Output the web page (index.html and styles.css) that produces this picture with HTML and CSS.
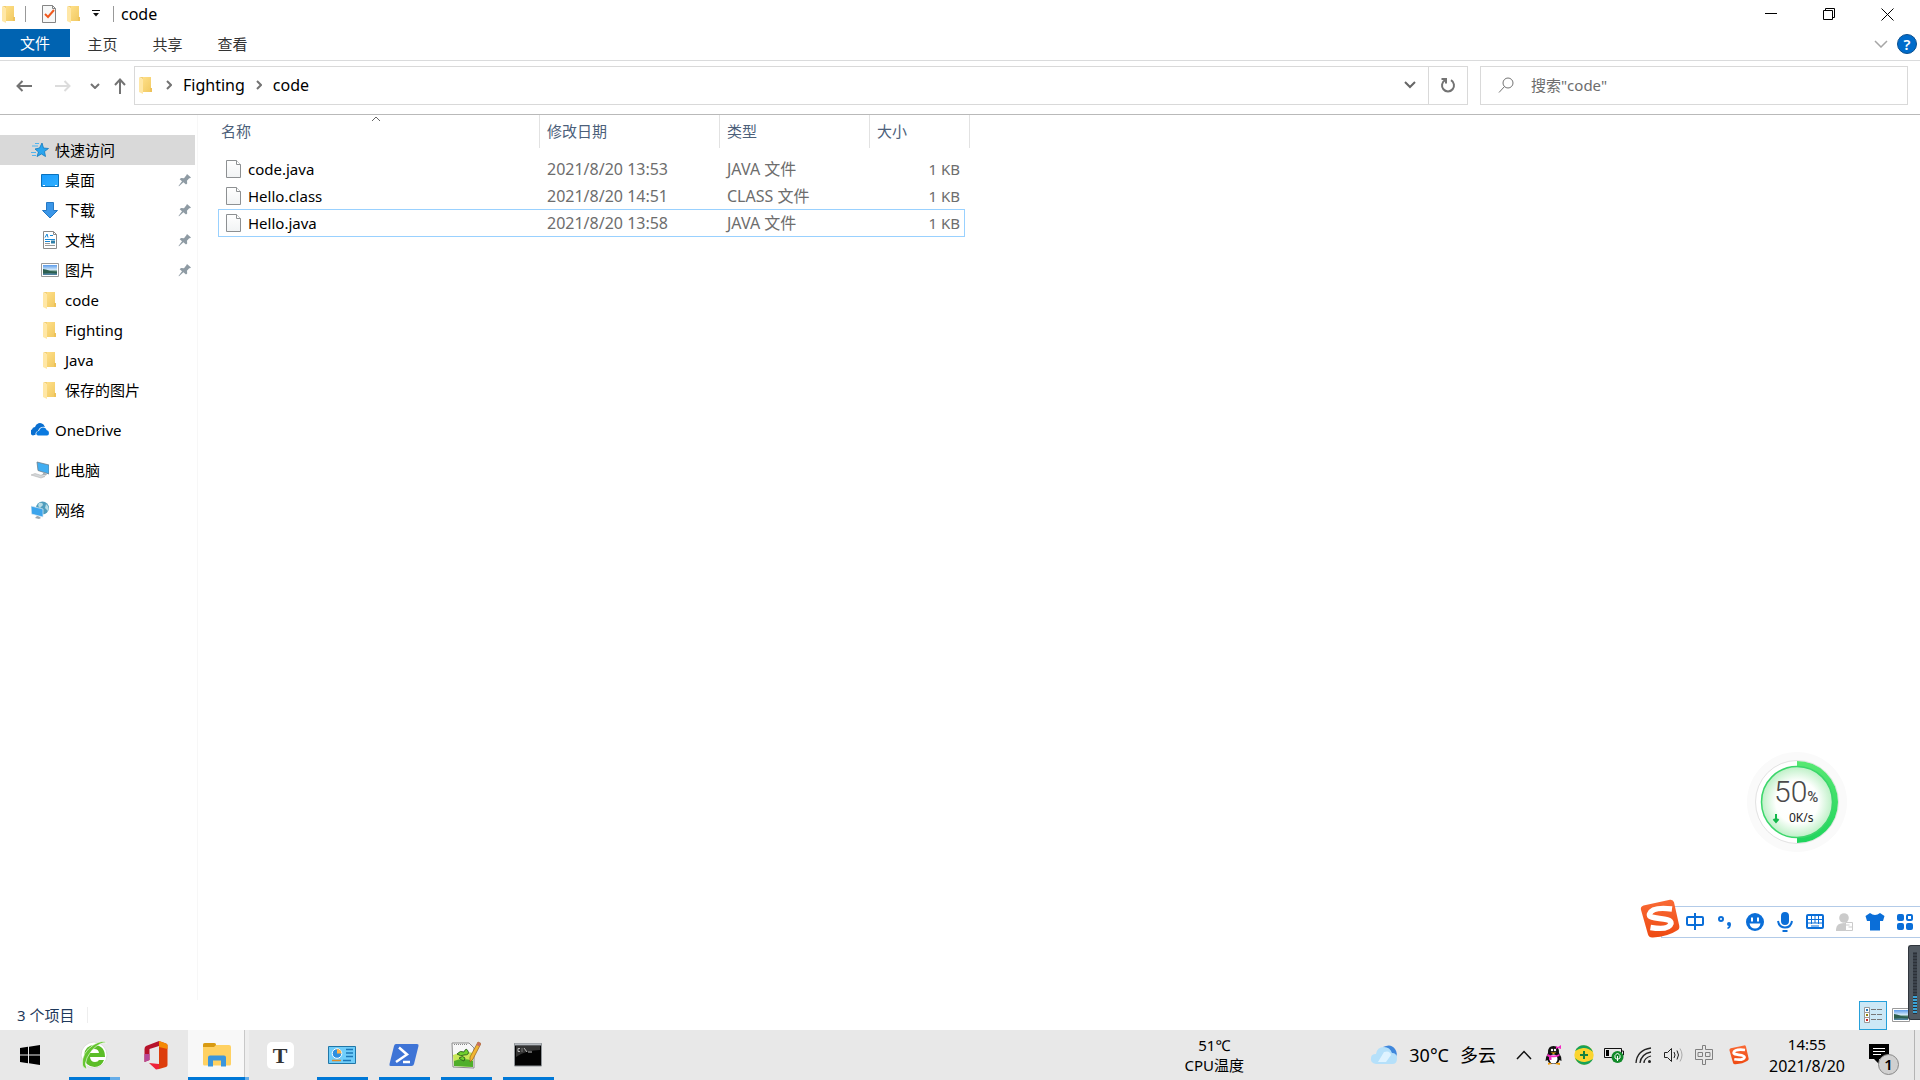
FILE: index.html
```html
<!DOCTYPE html>
<html lang="zh-CN">
<head>
<meta charset="utf-8">
<title>code</title>
<link rel="stylesheet" href="styles.css">
</head>
<body>
<svg class="defs" aria-hidden="true">
  <defs>
    <linearGradient id="g-folder" x1="0" y1="0" x2="1" y2="1"><stop offset="0" stop-color="#ffe08a"/><stop offset="1" stop-color="#f0c860"/></linearGradient>
    <linearGradient id="g-page" x1="0" y1="0" x2="0" y2="1"><stop offset="0" stop-color="#fff"/><stop offset="1" stop-color="#f1f3f4"/></linearGradient>
    <linearGradient id="g-sogou" x1="0" y1="0" x2="0" y2="1"><stop offset="0" stop-color="#f96a35"/><stop offset="1" stop-color="#ee4a12"/></linearGradient>
    <linearGradient id="g-screen" x1="0" y1="0" x2="1" y2="1"><stop offset="0" stop-color="#1a9cff"/><stop offset="1" stop-color="#2fb0ff"/></linearGradient>
    <linearGradient id="g-photo" x1="0" y1="0" x2="0" y2="1"><stop offset="0" stop-color="#5b9bea"/><stop offset=".5" stop-color="#d8ecfa"/><stop offset=".6" stop-color="#4e7f66"/><stop offset="1" stop-color="#4c7fa6"/></linearGradient>
  </defs>
  <symbol id="i-folder" viewBox="0 0 18 18">
    <path d="M5 1h9v11h1v4H6z" fill="url(#g-folder)"/><path d="M13 12h2v4h-2z" fill="#eec25a"/>
    <path d="M2 1.500l4 1.500v15l-4-2z" fill="#ffe7a6"/><path d="M2 1h4v2z" fill="#f3cf73"/>
  </symbol>
  <symbol id="i-file" viewBox="0 0 16 18">
    <path d="M.5.5h10l4 4v13H.5z" fill="url(#g-page)" stroke="#8d9092"/><path d="M10.500.500v4h4" fill="#fff" stroke="#8d9092"/>
  </symbol>
  <symbol id="i-pin" viewBox="0 0 14 14">
    <path d="M9 1l4 3.500-1 .8-.8-.1-2.200 2.600.2 2.600-1.200 1.100-2.600-2.300L1 13.200l-.5-.3 3.500-4.600-2.300-2L3 5l3 .2 2.200-2.600z" fill="#8f9ba4"/>
  </symbol>
  <symbol id="i-photo" viewBox="0 0 18 18">
    <path d="M.5 2.500h17v13H.5z" fill="#fff" stroke="#9a9a9a"/><path d="M2 4h14v10H2z" fill="url(#g-photo)"/><path d="M2 8q4 .3 7 2l7 1v1.500q-7-1-14 0z" fill="#2d5f50"/>
  </symbol>
  <symbol id="i-sogou" viewBox="0 0 40 40">
    <path d="M3.500 6.500L30 .8q3-.5 4 2.500L39.300 27q.5 3-2.300 4.500-9 6-24 7-4 .5-5-3L.9 10.500q-.5-3 2.600-4z" fill="url(#g-sogou)"/>
    <path d="M32 10Q12 7.500 9.500 15c-2 6.500 22 2.500 21.500 9.500Q29 31.500 10.500 28.500" fill="none" stroke="#fff" stroke-width="5.500"/>
  </symbol>
</svg>

<main class="window">
  <header class="titlebar">
    <svg class="icon"><use href="#i-folder"/></svg>
    <span class="divider"></span>
    <button class="quick" aria-label="属性"><svg class="icon" viewBox="0 0 18 18"><path d="M2.500.5h10l3 3v14h-13z" fill="#f7f8f8" stroke="#858585"/><path d="M12.500.5v3h3" fill="none" stroke="#858585"/><path d="M5 9l3 3 6-7" fill="none" stroke="#f0591e" stroke-width="2"/></svg></button>
    <button class="quick" aria-label="新建文件夹"><svg class="icon"><use href="#i-folder"/></svg></button>
    <button class="quick more" aria-label="自定义快速访问工具栏"><svg width="8" height="8" viewBox="0 0 8 8"><path d="M0 .5h8" stroke="#111"/><path d="M1 3h6L4 6.500z" fill="#111"/></svg></button>
    <span class="divider"></span>
    <h1 class="title">code</h1>
    <div class="controls">
      <button aria-label="最小化"><svg width="12" height="12"><path d="M0 5.500h12" stroke="#000"/></svg></button>
      <button aria-label="还原"><svg width="13" height="12" fill="none" stroke="#000"><path d="M.5 2.500h9v9h-9zM2.500 2V.5h9v9H10"/></svg></button>
      <button aria-label="关闭"><svg width="13" height="13" stroke="#000"><path d="M.5.5l12 12M12.500.5l-12 12"/></svg></button>
    </div>
  </header>

  <nav class="tabs">
    <button class="tab file">文件</button>
    <button class="tab">主页</button>
    <button class="tab">共享</button>
    <button class="tab">查看</button>
    <div class="tabs-end">
      <button aria-label="展开功能区"><svg width="14" height="8" fill="none" stroke="#a6a6a6"><path d="M1 1l6 6 6-6" stroke-width="1.500"/></svg></button>
      <button class="help" aria-label="帮助">?</button>
    </div>
  </nav>

  <div class="addressbar">
    <div class="nav">
      <button aria-label="后退"><svg width="16" height="12" fill="none" stroke="#737373" stroke-width="2"><path d="M1 6h15M6.500 1L1.500 6l5 5"/></svg></button>
      <button aria-label="前进"><svg width="16" height="12" fill="none" stroke="#dcdcdc" stroke-width="2"><path d="M0 6h15M9.500 1l5 5-5 5"/></svg></button>
      <button class="narrow" aria-label="最近位置"><svg width="10" height="6" fill="none" stroke="#737373" stroke-width="2"><path d="M1 1l4 4 4-4"/></svg></button>
      <button class="narrow" aria-label="上移"><svg width="12" height="16" fill="none" stroke="#737373" stroke-width="2"><path d="M6 16V2M1 7l5-5.500L11 7"/></svg></button>
    </div>
    <div class="path">
      <svg class="icon"><use href="#i-folder"/></svg>
      <svg class="sep" width="6" height="10" fill="none" stroke="#737373" stroke-width="2"><path d="M1 1l4 4-4 4"/></svg>
      <a href="#">Fighting</a>
      <svg class="sep" width="6" height="10" fill="none" stroke="#737373" stroke-width="2"><path d="M1 1l4 4-4 4"/></svg>
      <a href="#">code</a>
      <button class="drop" aria-label="以前的位置"><svg width="12" height="8" fill="none" stroke="#666" stroke-width="2"><path d="M1 1l5 5 5-5"/></svg></button>
      <button class="refresh" aria-label="刷新"><svg width="16" height="16" fill="none" stroke="#737373" stroke-width="2"><path d="M5 3.200A6 6 0 1 0 11 3.200"/><path d="M1.500 2H6v4.500"/></svg></button>
    </div>
    <label class="search">
      <svg width="16" height="16" fill="none" stroke="#737373"><circle cx="10" cy="6" r="5"/><path d="M6.500 9.500L1 15.500"/></svg>
      <input type="text" placeholder='搜索"code"' aria-label="搜索">
    </label>
  </div>

  <div class="content">
    <aside class="sidebar">
      <ul class="tree">
        <li><a class="node active" href="#"><svg class="icon" viewBox="0 0 18 18"><path d="M11 2l1.500 5 5 .5-4 3 1 5-4-2.500L6 15.500 7.500 11 4 8l4.500-1z" fill="#2aa5ee" stroke="#1379bd" stroke-width=".8"/><path d="M4 2.500h4M1 5h6M0 11.500h5M1 14.500h4" stroke="#4fb4ef"/></svg><span>快速访问</span></a>
          <ul>
            <li><a class="node" href="#"><svg class="icon" viewBox="0 0 18 18"><path d="M.5 3.500h17v12H.5z" fill="url(#g-screen)" stroke="#0a72bd"/><path d="M2 14.500h2m10 0h2" stroke="#fff"/></svg><span>桌面</span><svg class="pin"><use href="#i-pin"/></svg></a></li>
            <li><a class="node" href="#"><svg class="icon" viewBox="0 0 18 18"><path d="M5.500 1.500h7v8h4L9 17 1.500 9.500h4z" fill="#3a96e8" stroke="#2679c4"/></svg><span>下载</span><svg class="pin"><use href="#i-pin"/></svg></a></li>
            <li><a class="node" href="#"><svg class="icon" viewBox="0 0 18 18"><path d="M2.500.5h10l3 3v14h-13z" fill="#fff" stroke="#8a8a8a"/><path d="M12.500.5v3h3" fill="none" stroke="#8a8a8a"/><path d="M4 6.500l2-3.500 1 3.500M9 4.500h3M4 8.500h10M4 10.500h5" fill="none" stroke="#1688d8"/><path d="M10 9.500h4v3h-4z" fill="#2f7fa8"/><path d="M4 12.500h5M4 14.500h10" stroke="#999"/></svg><span>文档</span><svg class="pin"><use href="#i-pin"/></svg></a></li>
            <li><a class="node" href="#"><svg class="icon"><use href="#i-photo"/></svg><span>图片</span><svg class="pin"><use href="#i-pin"/></svg></a></li>
            <li><a class="node" href="#"><svg class="icon"><use href="#i-folder"/></svg><span>code</span></a></li>
            <li><a class="node" href="#"><svg class="icon"><use href="#i-folder"/></svg><span>Fighting</span></a></li>
            <li><a class="node" href="#"><svg class="icon"><use href="#i-folder"/></svg><span>Java</span></a></li>
            <li><a class="node" href="#"><svg class="icon"><use href="#i-folder"/></svg><span>保存的图片</span></a></li>
          </ul>
        </li>
        <li><a class="node" href="#"><svg class="icon" viewBox="0 0 18 18"><path d="M3.500 14A3 3 0 0 1 1 8.500 3 3 0 0 1 4 6a5 5 0 0 1 8.500-2.500L14 6q-5-1-7 4-3 .5-2.500 4z" fill="#0a6fd0"/><path d="M7 14.500q-2.500-1-1.500-3T8 10q1-3.500 4-3.500T15.500 9q2.500.5 2.500 3t-2 2.500z" fill="#0a7ae0"/></svg><span>OneDrive</span></a></li>
        <li><a class="node" href="#"><svg class="icon" viewBox="0 0 18 18"><path d="M6 1l12 3v9L7 9.500z" fill="#41aef2" stroke="#6b7f8d" stroke-width=".8"/><path d="M12 11v2l-2 1 5 .5 1-1.500-2-1z" fill="#a9b1b7"/><path d="M0 14l4-1.500 10 3-4 1.500z" fill="#d4d7d9" stroke="#aaa" stroke-width=".5"/></svg><span>此电脑</span></a></li>
        <li><a class="node" href="#"><svg class="icon" viewBox="0 0 18 18"><circle cx="11.500" cy="7" r="6.500" fill="#4f9dbd"/><path d="M8 2q4-1 4 2l-3 3q-3-2-1-5zm7 1q4 3 2 7l-3-3z" fill="#b6dce6"/><path d="M0 5l12 3v8L.5 13z" fill="#3ba4ec" stroke="#dceaf2" stroke-width=".7"/><path d="M6 15l-2 2 4 1 2-1-2-1.500z" fill="#9ca6ad"/></svg><span>网络</span></a></li>
      </ul>
    </aside>

    <section class="files">
      <table>
        <colgroup><col class="c-name"><col class="c-date"><col class="c-type"><col class="c-size"></colgroup>
        <thead>
          <tr><th class="sorted">名称<svg class="sort" width="10" height="6" fill="none" stroke="#666"><path d="M1 5l4-4 4 4"/></svg></th><th>修改日期</th><th>类型</th><th>大小</th></tr>
        </thead>
        <tbody>
          <tr><td><div class="name"><svg width="16" height="18"><use href="#i-file"/></svg>code.java</div></td><td class="wide">2021/8/20 13:53</td><td class="wide">JAVA 文件</td><td class="size">1 KB</td></tr>
          <tr><td><div class="name"><svg width="16" height="18"><use href="#i-file"/></svg>Hello.class</div></td><td class="wide">2021/8/20 14:51</td><td class="wide">CLASS 文件</td><td class="size">1 KB</td></tr>
          <tr class="focused"><td><div class="name"><svg width="16" height="18"><use href="#i-file"/></svg>Hello.java</div></td><td class="wide">2021/8/20 13:58</td><td class="wide">JAVA 文件</td><td class="size">1 KB</td></tr>
        </tbody>
      </table>
    </section>
  </div>

  <footer class="status">
    <span class="count">3 个项目</span>
    <div class="views">
      <button class="view on" aria-label="详细信息"><svg width="18" height="18" fill="none"><path d="M.5 1.500h5v5h-5zM.5 6.500h5v5h-5zM.5 11.500h5v5h-5z" fill="#fff" stroke="#999"/><path d="M2 4h2" stroke="#2474b5" stroke-width="2"/><path d="M2 9h2" stroke="#94840f" stroke-width="2"/><path d="M2 14h2" stroke="#c22" stroke-width="2"/><path d="M7 3.500h5m1 0h5M7 8.500h5m1 0h5M7 13.500h5m1 0h5" stroke="#777"/></svg></button>
      <button class="view" aria-label="大图标"><svg class="icon"><use href="#i-photo"/></svg></button>
    </div>
  </footer>
</main>

<footer class="taskbar">
  <button class="start" aria-label="开始"><svg width="20" height="20"><path d="M0 3l8-1.200V9.500H0zM9 1.700L20 0v9.500H9zM0 10.500h8v7.700L0 17zM9 10.500h11V20L9 18.300z"/></svg></button>
  <button class="app running multi" aria-label="浏览器"><svg width="28" height="30" viewBox="0 0 28 30"><circle cx="14" cy="15" r="13" fill="#fff" stroke="#ddd"/><path d="M25 17H10q.5 5 5 5 3 0 4-2h5q-2.500 7-9.500 7Q4 26 4 15.500 5 5 14.500 5 25 5.500 25 17zM10 13h9q-.5-4-4.500-4T10 13z" fill="#5bbd27"/><path d="M26.500 3Q23-.5 14 4.500 1 13 2.500 25q.5 3 4.500 4-3-5 0-11Q12 8 20 4q4-2 6.500-1z" fill="#64c52f" stroke="#fff" stroke-width=".6"/></svg></button>
  <button class="app" aria-label="Office"><svg width="24" height="30" viewBox="0 0 24 30"><path d="M15 1L2 6q-1.500 1-1.500 3v13l5-2V9l9.500-3z" fill="#b7132b"/><path d="M.5 14v8l5-2v-6z" fill="#b64898"/><path d="M15 1l7 2.500q1.500.7 1.500 2V25q0 1.300-1.500 2l-7 2z" fill="#dd3d0c"/><path d="M15 1l7 2.500q1.500.7 1.500 2V9L15 7z" fill="#f48a05"/><path d="M5 23l10 1v5l-3 .6z" fill="#ee2338"/></svg></button>
  <button class="app running active stack" aria-label="文件资源管理器"><svg width="28" height="24" viewBox="0 0 28 24"><path d="M0 2q0-2 2-2h9q2 0 2 2h13q2 0 2 2v17q0 1.500-1.500 1.500h-25Q0 22.500 0 21z" fill="#ffd162"/><path d="M0 4V2q0-2 2-2h9q2 0 2 2l-2 2z" fill="#d89a12"/><path d="M5 23.500v-9q0-2 2-2h14q2 0 2 2v9h-5v-6h-8v6z" fill="#3b96dd"/></svg></button>
  <button class="app" aria-label="Typora"><span class="typora">T</span></button>
  <button class="app running" aria-label="控制面板"><svg width="28" height="18" viewBox="0 0 28 18"><path d="M.5.5h27v17H.5z" fill="#6fcdfa" stroke="#2077a8"/><circle cx="9" cy="7.500" r="4.800" fill="#2c8fe0" stroke="#fff"/><path d="M9 7.500V3a4.500 4.500 0 0 1 4.500 4.500z" fill="#ffb347"/><path d="M18 3.500h7M18 7h7M18 10.500h7" stroke="#1d78b8" stroke-width="1.500"/><path d="M4 14.500h9" stroke="#e08b26" stroke-width="1.500"/><path d="M15 14.500h8" stroke="#1d78b8" stroke-width="1.500"/></svg></button>
  <button class="app running" aria-label="PowerShell"><svg width="30" height="22" viewBox="0 0 30 22"><path d="M7 0h21q2 0 1.500 2L25 20q-.5 2-2.500 2H1.500Q0 22 .5 20L5 2q.5-2 2-2z" fill="#3e74d6"/><path d="M10 3.500l8 7-11 7.500M14 18h7" fill="none" stroke="#fff" stroke-width="2.500"/></svg></button>
  <button class="app running" aria-label="Notepad++"><svg width="30" height="28" viewBox="0 0 30 28"><path d="M1 2h17l5 5v20L2 26z" fill="#f7f7f7" stroke="#8c8c8c"/><path d="M2 14q11-5 20-2v14L3 25z" fill="#c9e858"/><path d="M3 20q9-4 19 0v6L3 25z" fill="#4fae2a"/><path d="M6 13q3-4 7-2 2-5 4-1 2 4-4 4-3 2-7-1zm2 4q4-3 6 0l-1 3q-3-1-5-3z" fill="#6fd02d" stroke="#26531a" stroke-width=".8"/><path d="M3 3.500h14" stroke="#888" stroke-dasharray="1 1"/><path d="M27 1l3 1.500L22 18l-3 3 0-5z" fill="#f2b632" stroke="#91621e" stroke-width=".7"/><path d="M27 1l3 1.500-1.500 3-3-1.500z" fill="#c96e62"/></svg></button>
  <button class="app running" aria-label="命令提示符"><svg width="28" height="24" viewBox="0 0 28 24"><path d="M.5.500h27v22.500H.5z" fill="#030303" stroke="#8f9498"/><path d="M1 1.500h26" stroke="#b6bbc0" stroke-width="2"/><path d="M2 3h24v4q-14 0-24 7z" fill="#333"/><path d="M6 5.500H4v3h2M8 5.500v1m0 1v1M10 5l3 4M14 9h4" fill="none" stroke="#bbb"/></svg></button>

  <div class="tray">
    <div class="cpu"><span>51℃</span><span>CPU温度</span></div>
    <button class="weather"><svg width="28" height="20" viewBox="0 0 28 20"><path d="M13 2q8-4 12 2 3 4 1 8L16 8z" fill="#3f87dc"/><path d="M6 19Q0 18 1 13q0-4 5-4 1-7 8-7 6 0 8 6 5 0 5 5.500T22 19z" fill="#b5e0fa"/><path d="M8 17l6-10q6-2 7 3l-5 7z" fill="#dff3ff"/></svg><span>30°C</span><span>多云</span></button>
    <div class="icons">
      <button aria-label="显示隐藏的图标"><svg width="16" height="10" fill="none" stroke="#111" stroke-width="1.500"><path d="M1 9l7-7.500L15 9"/></svg></button>
      <button aria-label="QQ"><svg width="18" height="20" viewBox="0 0 18 20"><path d="M3 8q-.5-7 5.500-7T14 8q3 4 2.500 8l-2-1q-1 4-6 4t-6-4L.5 16Q1 11 3 8z" fill="#111"/><ellipse cx="8.500" cy="14" rx="4" ry="4.500" fill="#fff"/><circle cx="7" cy="5" r="1.200" fill="#fff"/><circle cx="10" cy="5" r="1.200" fill="#fff"/><path d="M5.500 7.500h6L8.500 9z" fill="#f7b500"/><path d="M2.500 9q6 3 12 0v2q-5 2-8 1v3H4v-3l-2-1zM11 1l2 1 3-2v4l-3-1-2 1z" fill="#f32bc2"/><path d="M3 18q2-1 4 1l-4 .8zm7 1q3-2 5-1v2z" fill="#f39b00"/></svg></button>
      <button aria-label="360安全卫士"><svg width="20" height="20" viewBox="0 0 20 20"><circle cx="10" cy="10" r="9.700" fill="#fbd42f"/><path d="M1 6Q4 0 10 .3q6 0 9 6.700-5-4.500-10-4-4 .5-8 3zm18 8q-3 6-9 5.700-6 0-9-6.700 5 4.500 10 4 4-.5 8-3z" fill="#16a15a"/><path d="M10 6v8M6 10h8" stroke="#16803f" stroke-width="2"/></svg></button>
      <button aria-label="电池"><svg width="20" height="16" viewBox="0 0 20 16"><path d="M.5 1.500h17v9H.5zM18 4h1.500v4H18" fill="none" stroke="#111"/><path d="M2 3h3v6H2z"/><circle cx="13.500" cy="10" r="6" fill="#128a2a"/><path d="M13.500 14V9M11 11V8.500l2.500-2.500L16 8.500V11l-2.500 1.500z" fill="none" stroke="#fff"/></svg></button>
      <button aria-label="无线网络"><svg width="18" height="18" viewBox="0 0 18 18" fill="none" stroke="#222" stroke-width="1.300"><path d="M1 17Q2 4 16 2M5 17q1-9 11-11M9 17q0-5 7-7"/><circle cx="14.500" cy="15.500" r="1.500" fill="#222" stroke="none"/></svg></button>
      <button aria-label="音量"><svg width="20" height="16" viewBox="0 0 20 16" fill="none" stroke="#222"><path d="M.5 5.500h3l4-4v13l-4-4h-3zM10 5q2 3 0 6M13 3.500q3 4.500 0 9"/><path d="M16 1.500q4 6.500 0 13" stroke="#aaa"/></svg></button>
      <button aria-label="中文输入"><svg width="18" height="20" viewBox="0 0 18 20" fill="none" stroke="#808080"><path d="M7.500.5h3v4h7v10h-7v5h-3v-5h-7v-10h7zM3 7.500h4.500v4H3zM10.500 7.500H15v4h-4.500z"/></svg></button>
      <button class="ime" aria-label="搜狗输入法"><svg width="20" height="20"><use href="#i-sogou"/></svg></button>
    </div>
    <button class="clock"><time>14:55</time><time>2021/8/20</time></button>
    <button class="notice" aria-label="通知"><svg width="20" height="20"><path d="M0 0h20v15H10v5l-5-5H0z"/><path d="M4 4.500h12M4 7.500h12M4 10.500h8" stroke="#fff"/></svg><span class="badge">1</span></button>
    <button class="desk" aria-label="显示桌面"></button>
  </div>
</footer>

<div class="ball">
  <svg width="102" height="102" viewBox="0 0 102 102">
    <defs>
      <radialGradient id="g-ball"><stop offset="0" stop-color="#fff"/><stop offset=".6" stop-color="#fdfffd"/><stop offset="1" stop-color="#bdf0c6"/></radialGradient>
      <linearGradient id="g-arc" x1="0" y1="0" x2="0" y2="1"><stop offset="0" stop-color="#58e873"/><stop offset="1" stop-color="#1ed45c"/></linearGradient>
    </defs>
    <circle cx="51" cy="51" r="50" fill="#fafafa"/><circle cx="51" cy="51" r="41.500" fill="#fff" stroke="#e2e2e2"/>
    <path d="M51 10a41 41 0 0 1 0 82z" fill="url(#g-arc)"/>
    <circle cx="51" cy="51" r="35.500" fill="url(#g-ball)" stroke="#3bd66b" stroke-width="1.500"/>
    <path d="M30 63v8M27.500 68l2.500 3 2.500-3" fill="none" stroke="#14b84b" stroke-width="2"/>
  </svg>
  <div class="percent">50<small>%</small></div>
  <div class="rate">0K/s</div>
</div>

<div class="imebar">
  <svg class="logo" width="40" height="40"><use href="#i-sogou"/></svg>
  <button aria-label="中英文"><svg width="18" height="18" fill="none" stroke="#0a6ed8" stroke-width="2"><rect x="1" y="4" width="16" height="8" rx="1"/><path d="M9 0v17"/></svg></button>
  <button aria-label="标点"><svg width="14" height="14" fill="none" stroke="#0a6ed8" stroke-width="2"><circle cx="3" cy="4" r="2"/><path d="M11 7a2 2 0 1 1 0 4 2 2 0 0 1 0-4zM13 9q0 4-3 5l-1-1q2-1 2-3z" fill="#0a6ed8" stroke="none"/></svg></button>
  <button aria-label="表情"><svg width="18" height="18"><circle cx="9" cy="9" r="9" fill="#0a6ed8"/><path d="M5 4.500h2v4H5zM11 4.500h2v4h-2zM3.500 10.500h11q-1 5-5.500 5t-5.500-5z" fill="#fff"/></svg></button>
  <button aria-label="语音"><svg width="16" height="20" fill="none" stroke="#0a6ed8" stroke-width="2"><rect x="5" y="1" width="6" height="11" rx="3" fill="#0a6ed8"/><path d="M1 9q1 6.500 7 6.500T15 9M5.500 19h5"/></svg></button>
  <button aria-label="键盘"><svg width="18" height="16" fill="none" stroke="#0a6ed8"><rect x="1" y="1" width="16" height="13" rx="1" stroke-width="2"/><path d="M2 5.500h14M2 9h14M5.500 2v8M9 2v7M12.500 2v8M5 12h8"/></svg></button>
  <button aria-label="用户"><svg width="18" height="18"><circle cx="8" cy="5" r="4.800" fill="#cbcbcb"/><path d="M0 18q-.5-8 8-8 3 0 5 2v6z" fill="#cbcbcb"/><path d="M9.500 9.500h7v8h-7zM9.500 12h4m3 2h-4" fill="#fff" stroke="#cbcbcb"/></svg></button>
  <button aria-label="皮肤"><svg width="20" height="18"><path d="M5 0q5 4 10 0l4.500 3-1.500 5h-3v9.500H5V8H2L.5 3z" fill="#0a6ed8"/></svg></button>
  <button aria-label="工具箱"><svg width="18" height="18"><g fill="#0a6ed8"><rect x="1" y="1" width="7" height="7" rx="2"/><rect x="1" y="10" width="7" height="7" rx="2"/><rect x="10" y="10" width="7" height="7" rx="2"/></g><rect x="11" y="2" width="5" height="5" rx="1" fill="none" stroke="#0a6ed8" stroke-width="2"/></svg></button>
</div>

<div class="meter"><span class="gauge"></span></div>
</body>
</html>
```
FILE: styles.css
```css
* { box-sizing: border-box; }
body {
  margin: 0;
  height: 100vh;
  display: flex;
  flex-direction: column;
  overflow: hidden;
  background: #fff;
  color: #000;
  font: 15px/20px "Noto Sans", "Noto Sans CJK SC", sans-serif;
}
button {
  display: flex;
  align-items: center;
  justify-content: center;
  margin: 0;
  padding: 0;
  border: 0;
  background: none;
  color: inherit;
  font: inherit;
}
a { color: inherit; text-decoration: none; }
ul { margin: 0; padding: 0; list-style: none; }
svg { display: block; flex: none; }
.defs { position: absolute; width: 0; height: 0; }
.icon { width: 18px; height: 18px; }

.window { flex: 1; min-height: 0; display: flex; flex-direction: column; }

.titlebar { display: flex; align-items: center; height: 29px; padding: 0 0 1px; }
.divider { width: 1px; height: 16px; margin: 0 7px; background: #999; }
.quick { width: 25px; }
.titlebar .quick:first-of-type { margin-left: 3px; }
.more { width: 20px; }
.title { margin: 0; font-size: 16px; font-weight: 400; line-height: 20px; }
.controls { display: flex; align-self: stretch; margin-left: auto; padding-right: 4px; }
.controls button { width: 58px; }

.tabs { display: flex; height: 32px; border-bottom: 1px solid #dadbdc; color: #333; }
.tab { width: 65px; height: 30px; }
.tab.file { width: 70px; height: 28px; background: #0063b1; color: #fff; }
.tabs-end { display: flex; align-items: center; gap: 9px; margin-left: auto; padding: 0 3px 2px 0; }
.help {
  width: 20px;
  height: 20px;
  border: 1px solid #0a4f8f;
  border-radius: 50%;
  background: #006ccb;
  color: #fff;
  font-weight: 600;
}

.addressbar { display: flex; padding: 5px 12px 9px 4px; border-bottom: 1px solid #b9b9b9; }
.nav { display: flex; width: 130px; }
.nav button { width: 39px; }
.nav .narrow { width: 25px; }
.path { flex: 1; display: flex; align-items: center; height: 39px; padding: 0 0 1px 2px; border: 1px solid #d9d9d9; font-size: 16px; }
.path .sep { margin: 0 11px; }
.drop { width: 36px; height: 37px; margin-left: auto; }
.refresh { width: 39px; height: 37px; border-left: 1px solid #d9d9d9; }
.search { display: flex; align-items: center; gap: 17px; width: 428px; margin-left: 12px; padding: 0 0 2px 17px; border: 1px solid #d9d9d9; }
.search input { flex: 1; min-width: 0; padding: 0; border: 0; outline: 0; background: none; font: inherit; }
.search input::placeholder { color: #6d6d6d; opacity: 1; }

.content { flex: 1; min-height: 0; display: flex; }
.sidebar { width: 198px; padding: 20px 2px 0 0; border-right: 1px solid #f7f7f7; }
.tree > li + li { margin-top: 10px; }
.node { display: flex; align-items: center; gap: 6px; height: 30px; padding: 0 3px 0 31px; }
.tree ul .node { padding-left: 41px; }
.active.node { background: #d9d9d9; }
.pin { width: 14px; height: 14px; margin-left: auto; }

.files { flex: 1; padding-left: 20px; }
table { width: 752px; table-layout: fixed; border-collapse: separate; border-spacing: 0; }
.c-name { width: 322px; }
.c-date { width: 180px; }
.c-type { width: 150px; }
.c-size { width: 100px; }
th {
  height: 33px;
  padding: 0 0 2px 7px;
  border-right: 1px solid #e2e2e2;
  color: #4c607a;
  font-weight: 400;
  text-align: left;
}
.sorted { position: relative; padding-left: 3px; }
.sort { position: absolute; top: 1px; left: 153px; }
tbody::before { content: ""; display: block; height: 7px; }
td { height: 27px; padding: 0 0 0 7px; color: #6d6d6d; }
td:first-child { padding-left: 8px; color: #000; }
.name { display: flex; align-items: center; gap: 6px; }
.wide { font-size: 16px; }
td.size { padding-right: 10px; text-align: right; }
.focused { position: relative; }
.focused::after { content: ""; position: absolute; inset: 0 5px -1px 0; border: 1px solid #99d1ff; }

.status { display: flex; align-items: center; height: 30px; padding-left: 17px; color: #1e395b; }
.count { padding-right: 13px; border-right: 1px solid #eee; line-height: 16px; }
.views { display: flex; margin-left: auto; padding-right: 5px; }
.view { width: 28px; height: 29px; }
.view.on { border: 1px solid #26a0da; background: #cce8f6; }

.taskbar { display: flex; height: 50px; background: #e8e8e8; }
.start { width: 63px; padding-right: 3px; }
.app { position: relative; width: 62px; }
.running::after { content: ""; position: absolute; left: 6px; right: 5px; bottom: 0; height: 3px; background: #0078d7; }
.multi::after { background: linear-gradient(90deg, #0078d7 80%, #66ade8 80%); }
.app.active { border-left: 1px solid #e8e8e8; background: linear-gradient(90deg, #f8f8f8 56px, #c8c8c8 56px 57px, #eee 57px); }
.app.active svg { margin-right: 3px; }
.stack::after { left: 0; right: 0; background: linear-gradient(90deg, #0078d7 57px, #66ade8 57px); }
.typora {
  width: 27px;
  height: 27px;
  border-radius: 5px;
  background: #fff;
  color: #333;
  font: bold 22px/27px "Liberation Serif", serif;
}
.tray { display: flex; margin-left: auto; }
.cpu { display: flex; flex-direction: column; align-items: center; justify-content: center; width: 64px; margin-right: 124px; }
.weather { gap: 11px; margin-right: 13px; font-size: 18px; }
.icons { display: flex; }
.icons button { width: 30px; }
.icons .ime { width: 40px; }
.clock { flex-direction: column; width: 96px; font-size: 15px; }
.clock time { line-height: 22px; }
.clock time + time { font-size: 16px; }
.notice { position: relative; width: 59px; padding-right: 11px; padding-bottom: 2px; }
.badge {
  position: absolute;
  right: 15px;
  bottom: 5px;
  width: 21px;
  height: 21px;
  border: 1px solid #888;
  border-radius: 50%;
  background: #d0d0d0;
  font-weight: 600;
  line-height: 19px;
}
.desk { width: 6px; border-left: 1px solid #b4b4b4; }

.ball { position: absolute; right: 72px; bottom: 227px; width: 102px; height: 102px; color: #4a4a4a; }
.percent { position: absolute; top: 23px; left: 28px; font: 300 30px/36px Roboto, sans-serif; }
.percent small { font-size: 15px; font-weight: 500; }
.rate { position: absolute; top: 58px; left: 43px; color: #222; font-size: 12px; line-height: 18px; }

.imebar {
  position: absolute;
  right: 0;
  bottom: 142px;
  display: flex;
  height: 32px;
  padding-left: 18px;
  border: 1px solid #b3cbe8;
  border-right: 0;
  background: #fff;
}
.imebar button { width: 30px; }
.logo { position: absolute; left: -22px; bottom: -2px; }

.meter {
  position: absolute;
  right: 0;
  bottom: 60px;
  width: 12px;
  height: 75px;
  padding: 6px 3px 5px 4px;
  border: 1px solid #30363d;
  border-right: 0;
  border-radius: 3px 0 0 3px;
  background: #525a62;
}
.gauge {
  display: block;
  height: 100%;
  background:
    repeating-linear-gradient(0deg, #2c3138 0 1px, transparent 1px 3px),
    linear-gradient(#3b424b 70%, #39a4d8 70%);
}
```
